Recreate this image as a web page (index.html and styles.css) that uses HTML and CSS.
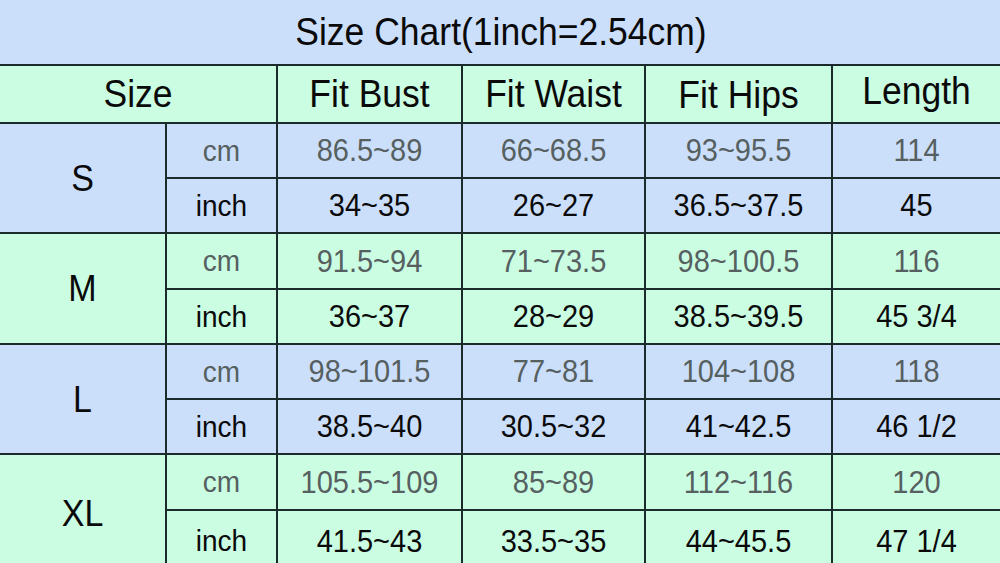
FILE: index.html
```html
<!DOCTYPE html>
<html>
<head>
<meta charset="utf-8">
<link rel="stylesheet" href="styles.css">
</head>
<body>
<div class="page">
  <div class="title"><span class="txt">Size Chart(1inch=2.54cm)</span></div>
  <div class="chart">
    <div class="cell head green span2"><span class="txt">Size</span></div>
    <div class="cell head green"><span class="txt">Fit Bust</span></div>
    <div class="cell head green"><span class="txt">Fit Waist</span></div>
    <div class="cell head green hips"><span class="txt">Fit Hips</span></div>
    <div class="cell head green len"><span class="txt">Length</span></div>

    <div class="cell size blue"><span class="txt">S</span></div>
    <div class="cell unit cm blue"><span class="txt">cm</span></div>
    <div class="cell val cm blue"><span class="txt">86.5~89</span></div>
    <div class="cell val cm blue"><span class="txt">66~68.5</span></div>
    <div class="cell val cm blue"><span class="txt">93~95.5</span></div>
    <div class="cell val cm blue"><span class="txt">114</span></div>
    <div class="cell unit blue"><span class="txt">inch</span></div>
    <div class="cell val blue"><span class="txt">34~35</span></div>
    <div class="cell val blue"><span class="txt">26~27</span></div>
    <div class="cell val blue"><span class="txt">36.5~37.5</span></div>
    <div class="cell val blue"><span class="txt">45</span></div>

    <div class="cell size green"><span class="txt">M</span></div>
    <div class="cell unit cm green"><span class="txt">cm</span></div>
    <div class="cell val cm green"><span class="txt">91.5~94</span></div>
    <div class="cell val cm green"><span class="txt">71~73.5</span></div>
    <div class="cell val cm green"><span class="txt">98~100.5</span></div>
    <div class="cell val cm green"><span class="txt">116</span></div>
    <div class="cell unit green"><span class="txt">inch</span></div>
    <div class="cell val green"><span class="txt">36~37</span></div>
    <div class="cell val green"><span class="txt">28~29</span></div>
    <div class="cell val green"><span class="txt">38.5~39.5</span></div>
    <div class="cell val green"><span class="txt">45 3/4</span></div>

    <div class="cell size blue"><span class="txt">L</span></div>
    <div class="cell unit cm blue"><span class="txt">cm</span></div>
    <div class="cell val cm blue"><span class="txt">98~101.5</span></div>
    <div class="cell val cm blue"><span class="txt">77~81</span></div>
    <div class="cell val cm blue"><span class="txt">104~108</span></div>
    <div class="cell val cm blue"><span class="txt">118</span></div>
    <div class="cell unit blue"><span class="txt">inch</span></div>
    <div class="cell val blue"><span class="txt">38.5~40</span></div>
    <div class="cell val blue"><span class="txt">30.5~32</span></div>
    <div class="cell val blue"><span class="txt">41~42.5</span></div>
    <div class="cell val blue"><span class="txt">46 1/2</span></div>

    <div class="cell size green"><span class="txt">XL</span></div>
    <div class="cell unit cm green"><span class="txt">cm</span></div>
    <div class="cell val cm green"><span class="txt">105.5~109</span></div>
    <div class="cell val cm green"><span class="txt">85~89</span></div>
    <div class="cell val cm green"><span class="txt">112~116</span></div>
    <div class="cell val cm green"><span class="txt">120</span></div>
    <div class="cell unit green"><span class="txt">inch</span></div>
    <div class="cell val green"><span class="txt">41.5~43</span></div>
    <div class="cell val green"><span class="txt">33.5~35</span></div>
    <div class="cell val green"><span class="txt">44~45.5</span></div>
    <div class="cell val green"><span class="txt">47 1/4</span></div>
  </div>
</div>
</body>
</html>
```
FILE: styles.css
```css
html, body {
  margin: 0;
  padding: 0;
}
body {
  width: 1000px;
  height: 563px;
  overflow: hidden;
  background: #cbdffb;
  font-family: "Liberation Sans", Arial, sans-serif;
  color: #0a0a0a;
}
.page {
  width: 1000px;
  height: 563px;
  display: flex;
  flex-direction: column;
}
.txt {
  display: inline-block;
  transform: scaleY(1.07);
}
.title {
  height: 64px;
  flex: none;
  display: flex;
  align-items: center;
  justify-content: center;
  font-size: 35.5px;
  background: #cbdffb;
  padding-left: 2px;
  box-sizing: border-box;
}
.chart {
  flex: none;
  display: grid;
  grid-template-columns: 165px 109px 183px 181px 185px 167px;
  grid-template-rows: 56px 53px 53px 54px 53px 53px 53px 54px 60px;
  gap: 2px;
  background: #1b2a2a;
  border-top: 2px solid #1b2a2a;
}
.cell {
  display: flex;
  align-items: center;
  justify-content: center;
  white-space: nowrap;
}
.blue { background: #cbdffb; }
.green { background: #cbfde3; }
.head {
  font-size: 35.5px;
}
.head.hips {
  padding-top: 2px;
}
.head.len {
  padding-bottom: 6px;
}
.span2 {
  grid-column: span 2;
}
.size {
  grid-row: span 2;
  font-size: 34px;
}
.unit {
  font-size: 28px;
}
.val {
  font-size: 29px;
}
.cm {
  color: #566060;
}
```
